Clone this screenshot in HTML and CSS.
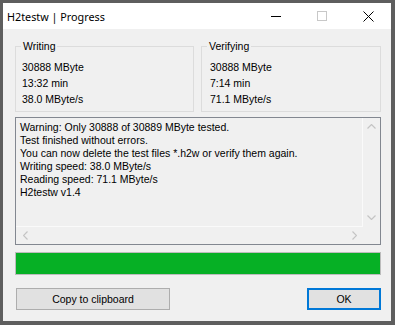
FILE: index.html
```html
<!DOCTYPE html>
<html lang="en">
<head>
    <meta charset="UTF-8">
    <meta name="viewport" content="width=device-width, initial-scale=1.0">
    <title>H2testw | Progress</title>
    <link rel="stylesheet" href="styles.css">
</head>
<body>
    <div class="window">
        <div class="titlebar">
            <span class="title">H2testw | Progress</span>
            <div class="controls">
                <span class="control">
                    <svg width="10" height="10" viewBox="0 0 10 10"><line x1="0" y1="5.5" x2="10" y2="5.5" stroke="#000" stroke-width="1"/></svg>
                </span>
                <span class="control">
                    <svg width="10" height="10" viewBox="0 0 10 10"><rect x="0.5" y="0.5" width="9" height="9" fill="none" stroke="#c8c8c8" stroke-width="1"/></svg>
                </span>
                <span class="control">
                    <svg width="11" height="11" viewBox="0 0 11 11"><path d="M0.5 0.5 L10.5 10.5 M10.5 0.5 L0.5 10.5" stroke="#000" stroke-width="1"/></svg>
                </span>
            </div>
        </div>

        <div class="content">
            <div class="groups">
                <fieldset class="group">
                    <legend>Writing</legend>
                    <div class="line">30888 MByte</div>
                    <div class="line">13:32 min</div>
                    <div class="line">38.0 MByte/s</div>
                </fieldset>
                <fieldset class="group group-right">
                    <legend>Verifying</legend>
                    <div class="line">30888 MByte</div>
                    <div class="line">7:14 min</div>
                    <div class="line">71.1 MByte/s</div>
                </fieldset>
            </div>

            <div class="log">
                <div class="log-text">
                    <div>Warning: Only 30888 of 30889 MByte tested.</div>
                    <div>Test finished without errors.</div>
                    <div>You can now delete the test files *.h2w or verify them again.</div>
                    <div>Writing speed: 38.0 MByte/s</div>
                    <div>Reading speed: 71.1 MByte/s</div>
                    <div>H2testw v1.4</div>
                </div>
                <div class="vscroll">
                    <svg width="9" height="5" viewBox="0 0 9 5"><polyline points="0.5,4.5 4.5,0.5 8.5,4.5" fill="none" stroke="#c4c4c4" stroke-width="1.2"/></svg>
                    <svg width="9" height="5" viewBox="0 0 9 5"><polyline points="0.5,0.5 4.5,4.5 8.5,0.5" fill="none" stroke="#c4c4c4" stroke-width="1.2"/></svg>
                </div>
                <div class="hscroll">
                    <svg width="5" height="9" viewBox="0 0 5 9"><polyline points="4.5,0.5 0.5,4.5 4.5,8.5" fill="none" stroke="#c4c4c4" stroke-width="1.2"/></svg>
                    <svg width="5" height="9" viewBox="0 0 5 9"><polyline points="0.5,0.5 4.5,4.5 0.5,8.5" fill="none" stroke="#c4c4c4" stroke-width="1.2"/></svg>
                </div>
                <div class="corner"></div>
            </div>

            <div class="progress">
                <div class="progress-fill" style="width: 100%"></div>
            </div>

            <div class="buttons">
                <button class="btn btn-copy">Copy to clipboard</button>
                <button class="btn btn-ok">OK</button>
            </div>
        </div>
    </div>
</body>
</html>
```

FILE: styles.css
```css
body {
    margin: 0;
    background: #5e5e5e;
    font-family: "Liberation Sans", Arial, sans-serif;
    font-size: 10.5px;
    color: #000;
}
.window {
    margin: 3px 0 0 3px;
    width: 388px;
    height: 318px;
    background: #f0f0f0;
    display: flex;
    flex-direction: column;
}
.titlebar {
    height: 26px;
    background: #ffffff;
    display: flex;
    align-items: center;
}
.title {
    flex: 1;
    margin-left: 4px;
    font-family: "Noto Sans", sans-serif;
    font-size: 10.8px;
}
.controls {
    display: flex;
    align-self: stretch;
}
.control {
    width: 46px;
    display: flex;
    align-items: center;
    justify-content: center;
}
.content {
    padding: 11px 10px 11px 12px;
}
.groups {
    display: flex;
    gap: 7px;
}
.group {
    box-sizing: border-box;
    width: 179px;
    min-width: 0;
    margin: 0;
    padding: 6px 0 4px 6px;
    border: 1px solid #dcdcdc;
}
.group-right {
    width: 180px;
    padding-left: 8px;
}
.group legend {
    padding: 0 2px;
    margin-left: -1px;
    line-height: 13px;
}
.group-right legend {
    margin-left: -3px;
}
.line {
    line-height: 16px;
}
.log {
    margin-top: 5px;
    height: 128px;
    box-sizing: border-box;
    border: 1px solid #828790;
    display: grid;
    grid-template-columns: 1fr 17px;
    grid-template-rows: 1fr 17px;
}
.log-text {
    padding: 3px 4px;
    line-height: 13px;
    white-space: nowrap;
    overflow: hidden;
    border-right: 1px solid #fafafa;
    border-bottom: 1px solid #fafafa;
}
.vscroll {
    display: flex;
    flex-direction: column;
    justify-content: space-between;
    align-items: center;
    padding: 6px 0 7px 0;
}
.hscroll {
    display: flex;
    justify-content: space-between;
    align-items: center;
    padding: 0 6px 0 7px;
}
.progress {
    margin-top: 7px;
    height: 23px;
    box-sizing: border-box;
    border: 1px solid #bcbcbc;
    background: #e6e6e6;
}
.progress-fill {
    height: 100%;
    background: #06b025;
}
.buttons {
    margin-top: 13px;
    display: flex;
    justify-content: space-between;
}
.btn {
    height: 22px;
    box-sizing: border-box;
    background: #e1e1e1;
    border: 1px solid #adadad;
    font-family: "Liberation Sans", Arial, sans-serif;
    font-size: 10.5px;
    color: #000;
    padding: 0;
}
.btn-copy {
    width: 154px;
    margin-left: 1px;
}
.btn-ok {
    width: 74px;
    border: 2px solid #0078d7;
}
```
